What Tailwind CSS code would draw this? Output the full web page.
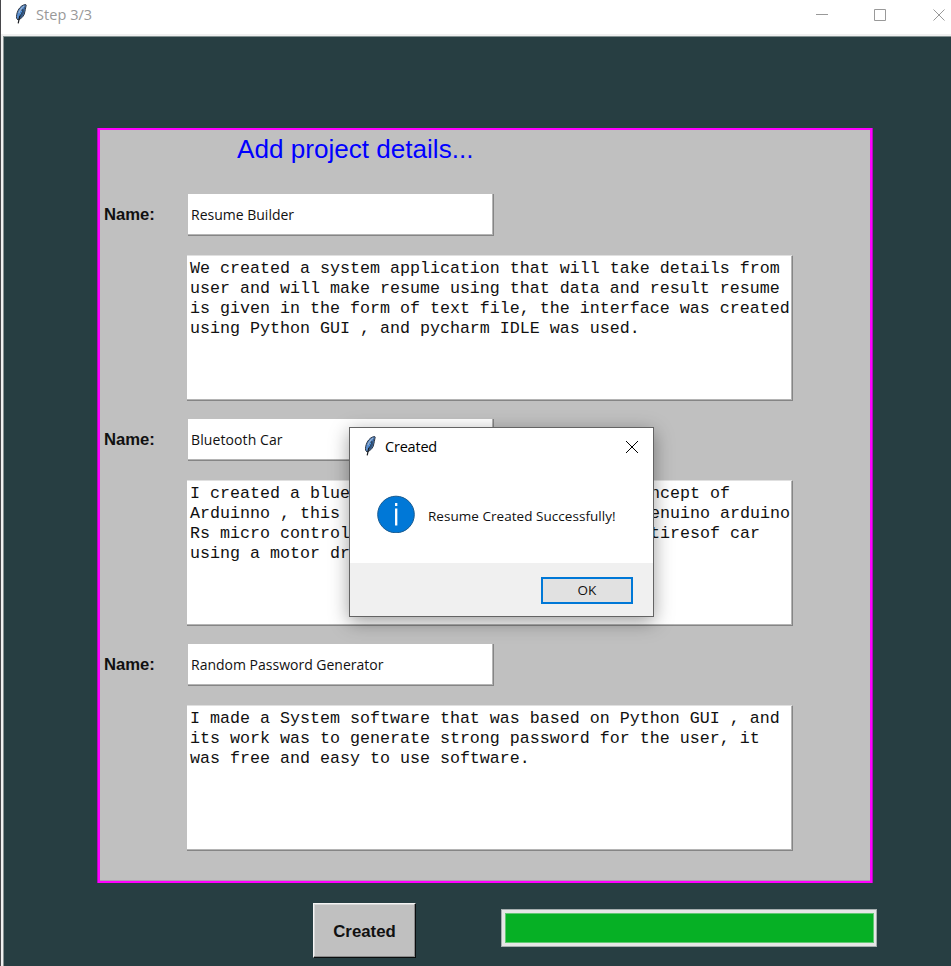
<!DOCTYPE html>
<html lang="en">
<head>
<meta charset="utf-8">
<title>Step 3/3</title>
<script src="https://cdn.jsdelivr.net/npm/@tailwindcss/browser@4"></script>
</head>
<body class="w-[951px] h-[966px] overflow-hidden bg-white">
<svg width="0" height="0" class="absolute">
  <symbol id="feather" viewBox="0 0 12 20">
    <path d="M10.800 .6C7.800 .6 4.800 3 3.200 6.200C1.900 8.800 1.200 11.800 1.600 14.200L3 16C5.800 15 8.300 12.800 9.300 10C10.100 7.300 10.600 4 11.200 1Z" fill="#5b8fd0" stroke="#2c3440" stroke-width="1"/>
    <path d="M10.300 1.500C8.300 5 6.500 8.500 5.200 12L3.200 15.400C6 14 8.200 11.700 8.900 9C9.500 6.300 9.900 4 10.300 1.500Z" fill="#31557f"/>
    <path d="M7.600 5.500C5.600 9 4 12.500 3.200 19.400" fill="none" stroke="#1c1f24" stroke-width="1.200"/>
    <path d="M9 2C6.600 3.800 5 6.200 4 9" fill="none" stroke="#a9b8c9" stroke-width="1"/>
    <path d="M7 6.500L4.500 11.500" fill="none" stroke="#4f9bf0" stroke-width="1"/>
  </symbol>
</svg>
<div class="flex h-full w-full border-l border-[#48484b]">
  <div class="flex flex-col flex-1 min-w-0">
    <header class="h-[34px] flex items-start bg-white">
      <svg class="w-[12px] h-[20px] ml-[14px] mt-[4px]"><use href="#feather"/></svg>
      <span class="ml-[9px] mt-[4px] leading-[22px] text-[14.5px] tracking-[0.05px] text-[#999] font-['Open_Sans',sans-serif]">Step 3/3</span>
      <svg class="ml-auto w-[135px] h-[30px]" viewBox="0 0 135 30" fill="none" stroke="#999" stroke-width="1">
        <path d="M0 14.500H12M58.500 9.500H69.500V20.500H58.500ZM117.500 9.500L128.500 20.500M128.500 9.500L117.500 20.500"/>
      </svg>
    </header>
    <div class="h-[2px] bg-[#f0f0f0]"></div>
    <div class="flex-1 min-h-0 flex border-l-2 border-[#f0f0f0]">
      <main class="flex-1 bg-[#273e42] border-t border-l border-t-[#829090] border-l-[#8a9494] pt-[91px] pl-[93px]">
        <section class="w-[776px] h-[755px] border-x border-x-[#b808c2]">
          <div class="h-full border-2 border-[#ff00ff] bg-[#c0c0c0] pl-[4px] shadow-[inset_0_-1px_0_#b59ab5]">
            <h1 class="pl-[133px] pt-[4px] h-[64px] text-[26.1px] leading-[30px] text-[#0000ff] font-['Liberation_Sans',sans-serif]">Add project details...</h1>

            <div class="grid grid-cols-[83px_1fr] h-[225px] content-start">
              <label class="leading-[41px] text-[16.67px] font-bold text-[#111] font-['Liberation_Sans',sans-serif]">Name:</label>
              <div class="ml-[1px] w-[306px] h-[42px] bg-white border-r border-b border-[#858585] shadow-[inset_-1px_-1px_0_#b4b4b4] pl-[3px] leading-[42px] text-[14px] text-[#111] font-['Open_Sans',sans-serif]">Resume Builder</div>
              <pre class="col-start-2 mt-[19px] w-[606px] h-[146px] bg-white border-r border-b border-t border-t-[#e0e0e0] border-r-[#858585] border-b-[#858585] shadow-[inset_-1px_-1px_0_#b4b4b4] pl-[3px] pt-[3px] text-[16.667px] leading-[20px] text-[#111] font-['Liberation_Mono',monospace]">We created a system application that will take details from
user and will make resume using that data and result resume
is given in the form of text file, the interface was created
using Python GUI , and pycharm IDLE was used.</pre>
            </div>

            <div class="grid grid-cols-[83px_1fr] h-[225px] content-start">
              <label class="leading-[42px] text-[16.67px] font-bold text-[#111] font-['Liberation_Sans',sans-serif]">Name:</label>
              <div class="ml-[1px] w-[306px] h-[42px] bg-white border-r border-b border-[#858585] shadow-[inset_-1px_-1px_0_#b4b4b4] pl-[3px] leading-[42px] text-[14px] tracking-[0.1px] text-[#111] font-['Open_Sans',sans-serif]">Bluetooth Car</div>
              <div class="col-start-2 mt-[19px] w-[606px] h-[146px] bg-white border-r border-b border-t border-t-[#e0e0e0] border-r-[#858585] border-b-[#858585] shadow-[inset_-1px_-1px_0_#b4b4b4] pl-[3px] pt-[3px] text-[16.667px] leading-[20px] text-[#111] font-['Liberation_Mono',monospace]">
                <div class="flex"><span class="w-[460px]">I created a blue</span><span>ncept of</span></div>
                <div class="flex"><span class="w-[460px]">Arduinno , this</span><span>enuino arduino</span></div>
                <div class="flex"><span class="w-[460px]">Rs micro control</span><span>tiresof car</span></div>
                <div>using a motor dr</div>
              </div>
            </div>

            <div class="grid grid-cols-[83px_1fr] content-start">
              <label class="leading-[42px] text-[16.67px] font-bold text-[#111] font-['Liberation_Sans',sans-serif]">Name:</label>
              <div class="ml-[1px] w-[306px] h-[42px] bg-white border-r border-b border-[#858585] shadow-[inset_-1px_-1px_0_#b4b4b4] pl-[3px] leading-[42px] text-[14px] text-[#111] font-['Open_Sans',sans-serif]">Random Password Generator</div>
              <pre class="col-start-2 mt-[19px] w-[606px] h-[146px] bg-white border-r border-b border-t border-t-[#e0e0e0] border-r-[#858585] border-b-[#858585] shadow-[inset_-1px_-1px_0_#b4b4b4] pl-[3px] pt-[3px] text-[16.667px] leading-[20px] text-[#111] font-['Liberation_Mono',monospace]">I made a System software that was based on Python GUI , and
its work was to generate strong password for the user, it
was free and easy to use software.</pre>
            </div>
          </div>
        </section>

        <div class="flex pl-[216px] pt-[20px]">
          <button class="w-[103px] h-[55px] pt-[2px] bg-[#c0c0c0] border border-t-[#f4f4f4] border-l-[#f4f4f4] border-r-[#0a0d0e] border-b-[#0a0d0e] shadow-[inset_-1px_-1px_0_#8a8a8a,inset_1px_1px_0_#d8d8d8] text-[16.8px] font-bold text-[#111] font-['Liberation_Sans',sans-serif]">Created</button>
          <div class="ml-[85px] mt-[6px] w-[376px] h-[38px] border border-[#a5adae] bg-[#e6e6e6] p-[3px] pr-[2px]">
            <div class="h-full bg-[#06b025] border border-[#62c873]"></div>
          </div>
        </div>
      </main>
    </div>
  </div>
</div>

<div role="dialog" class="absolute left-[349px] top-[427px] w-[305px] h-[190px] flex flex-col bg-white border border-[#646464] shadow-[0_5px_18px_rgba(0,0,0,0.38)]">
  <div class="flex items-start h-[67px]">
    <svg class="w-[12px] h-[20px] ml-[14px] mt-[8px]"><use href="#feather"/></svg>
    <span class="ml-[9px] mt-[8px] leading-[22px] text-[14.5px] tracking-[-0.2px] text-black font-['Open_Sans',sans-serif]">Created</span>
    <svg class="ml-auto mr-[14px] mt-[12px] w-[14px] h-[14px]" viewBox="0 0 14 14" fill="none" stroke="#000" stroke-width="1"><path d="M1 1L13 13M13 1L1 13"/></svg>
  </div>
  <div class="flex-1 flex items-start pl-[27px]">
    <svg class="w-[38px] h-[38px]" viewBox="0 0 38 38"><circle cx="19" cy="19.500" r="18.300" fill="#0078d7" stroke="#195b91" stroke-width="1"/><path d="M19.200 13.500V30.500M19.200 8V11" stroke="#fff" stroke-width="2.300"/></svg>
    <span class="ml-[13px] mt-[11px] leading-[20px] text-[13.5px] tracking-[0.04px] text-[#111] whitespace-nowrap font-['Open_Sans',sans-serif]">Resume Created Successfully!</span>
  </div>
  <div class="h-[53px] bg-[#f0f0f0] flex justify-end pr-[20px] pt-[14px]">
    <button class="w-[92px] h-[27px] bg-[#e1e1e1] border-2 border-[#0078d7] text-[13.500px] leading-[23px] text-[#111] font-['Open_Sans',sans-serif]">OK</button>
  </div>
</div>
</body>
</html>
